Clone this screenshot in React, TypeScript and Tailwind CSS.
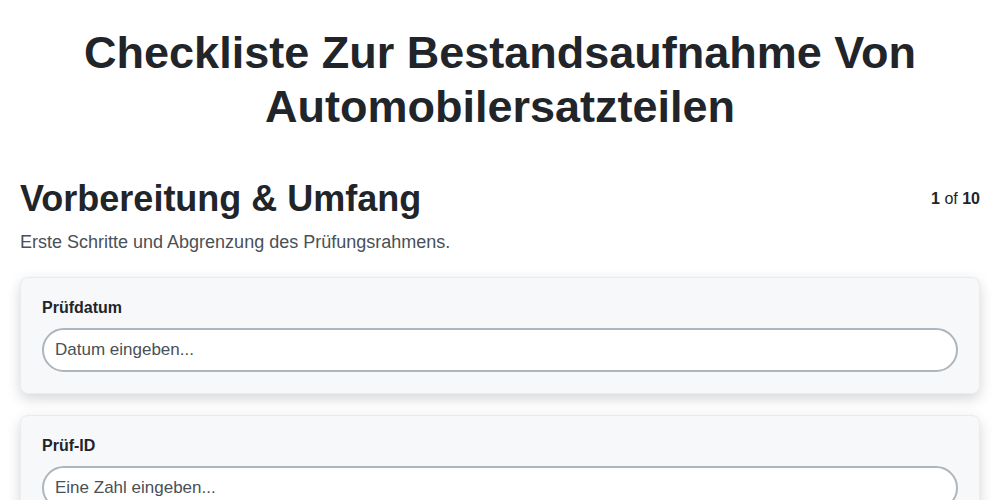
import React from "react";

const fields = [
  { label: "Prüfdatum", placeholder: "Datum eingeben..." },
  { label: "Prüf-ID", placeholder: "Eine Zahl eingeben..." },
];

export default function App() {
  return (
    <div className="min-h-screen bg-white text-[#212529]" style={{ fontFamily: '"Liberation Sans", Arial, sans-serif' }}>
      <div className="px-5">
        <h1 className="pt-[26px] text-center text-[45px] font-bold leading-[54px]">
          Checkliste Zur Bestandsaufnahme Von
          <br />
          Automobilersatzteilen
        </h1>
        <div className="mt-[43px] flex items-start justify-between">
          <h2 className="text-[36px] font-bold leading-[44px]">Vorbereitung &amp; Umfang</h2>
          <div className="mt-[10px] text-[16px]">
            <span className="font-bold">1</span> of <span className="font-bold">10</span>
          </div>
        </div>
        <p className="mt-[8px] text-[18px] leading-[27px] text-[#495057]">Erste Schritte und Abgrenzung des Prüfungsrahmens.</p>
        <div className="mt-[21px] flex flex-col gap-[21px]">
          {fields.map((f) => (
            <div
              key={f.label}
              className="rounded-lg border border-[#e9ecef] bg-[#f7f8fa] px-[21px] pt-[20px] pb-[21px] shadow-[0_5px_14px_rgba(0,0,0,0.16)]"
            >
              <label className="block text-[16px] font-bold leading-[20px]">{f.label}</label>
              <input
                className="mt-[10px] block h-[44px] w-full rounded-full border-2 border-[#adb5bd] bg-white px-[11px] text-[17px] text-[#495057] placeholder-[#495057] outline-none"
                placeholder={f.placeholder}
              />
            </div>
          ))}
        </div>
      </div>
    </div>
  );
}
